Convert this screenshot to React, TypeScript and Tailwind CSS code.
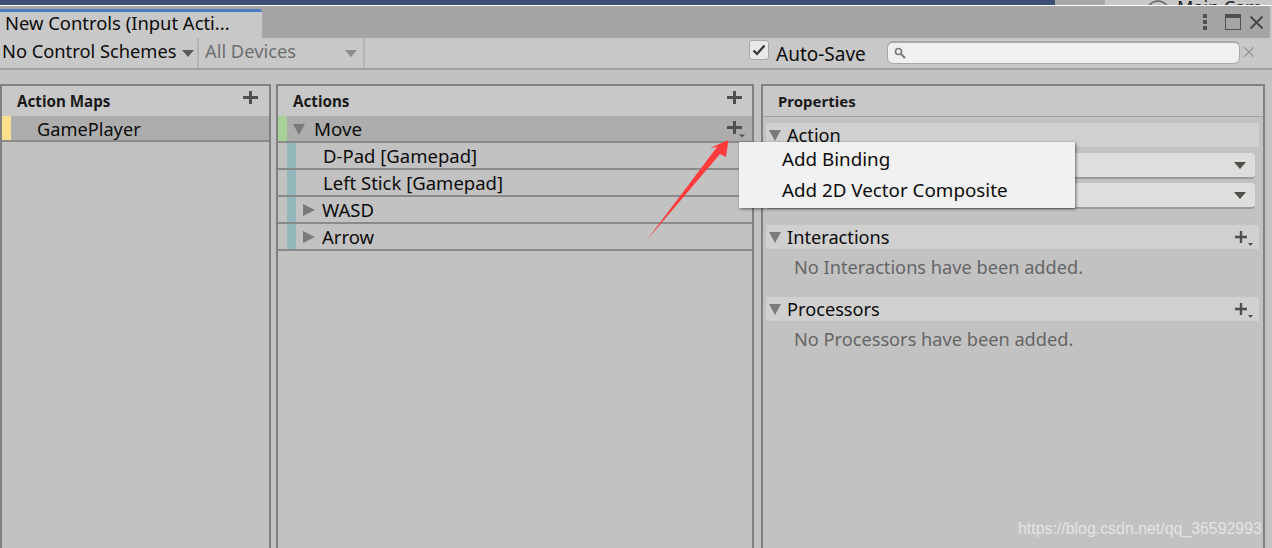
const FONT = "font-['Noto_Sans','Open_Sans',sans-serif]";

function Caret({ open, className = "" }: { open?: boolean; className?: string }) {
  return (
    <svg width="12" height="12" viewBox="0 0 12 12" className={`shrink-0 ${className}`}>
      {open ? <path d="M0 1h12L6 12z" fill="#7a7a7a" /> : <path d="M0 0l12 6L0 12z" fill="#7a7a7a" />}
    </svg>
  );
}

function Plus({ more }: { more?: boolean }) {
  return (
    <svg width="20" height="18" viewBox="0 0 20 18" className="shrink-0">
      <path d="M8.5 1v13M1 7.5h15" stroke="#505050" strokeWidth="3" fill="none" />
      {more && <path d="M13 14.5h6l-3 3z" fill="#505050" />}
    </svg>
  );
}

function SectionPlus() {
  return (
    <svg width="18" height="16" viewBox="0 0 18 16" className="mt-[4px] shrink-0">
      <path d="M6 0v12M0 6h12" stroke="#505050" strokeWidth="2.4" fill="none" />
      <path d="M13 12h5l-2.5 3z" fill="#505050" />
    </svg>
  );
}

function SmallDown({ color = "#5a5a5a" }: { color?: string }) {
  return (
    <svg width="12" height="7" viewBox="0 0 12 7" className="shrink-0">
      <path d="M0 0h12L6 7z" fill={color} />
    </svg>
  );
}

function Cross({ size, stroke, color }: { size: number; stroke: number; color: string }) {
  return (
    <svg width={size} height={size} viewBox="0 0 12 12" className="shrink-0">
      <path d="M0.5 0.5l11 11M11.5 0.5l-11 11" stroke={color} strokeWidth={stroke} fill="none" />
    </svg>
  );
}

function Row({ label, caret, indent }: { label: string; caret?: boolean; indent: string }) {
  return (
    <div className="flex h-[27px] items-center border-b-2 border-[#8a8a8a] bg-[#c2c2c2]">
      <div className="ml-[9px] h-full w-[9px] bg-[#93b9bd]" />
      <div className={`flex items-center ${indent}`}>
        {caret && <Caret className="mr-[7px]" />}
        <span className="mt-[2px] text-[18.5px] leading-none text-[#0c0c0c]">{label}</span>
      </div>
    </div>
  );
}

function PropSection({ title, empty }: { title: string; empty: string }) {
  return (
    <div className="mb-[16px]">
      <div className="ml-[3px] mr-[4px] flex h-[24px] items-center bg-[#d0d0d0] pl-[3px] pr-[6px]">
        <Caret open />
        <span className="ml-[6px] text-[18.2px] leading-none text-[#0c0c0c]">{title}</span>
        <span className="ml-auto">
          <SectionPlus />
        </span>
      </div>
      <div className="ml-[31px] mt-[5px] h-[27px] text-[18.2px] leading-[27px] text-[#666666]">{empty}</div>
    </div>
  );
}

export default function App() {
  return (
    <div className={`relative h-[548px] w-[1272px] overflow-hidden bg-[#c2c2c2] ${FONT}`}>
      {/* Strip of the editor behind the window */}
      <div className="flex h-[5px] overflow-hidden bg-[#c8c8c8]">
        <div className="w-[1055px] shrink-0 bg-[#3d4f73]" />
        <div className="w-[50px] shrink-0 bg-[#a8a8a8]" />
        <svg width="20" height="5" viewBox="0 0 20 5" className="ml-[43px] shrink-0">
          <path d="M1 5Q10 -3 19 5" stroke="#666666" strokeWidth="1.5" fill="none" />
        </svg>
        <span className="-mt-[5px] ml-[9px] text-[18px] leading-6 whitespace-nowrap text-[#222222]">Main Cam</span>
      </div>
      <div className="h-px bg-white" />

      {/* Tab bar */}
      <div className="bg-[#c8c8c8]">
        <div className="mr-[2px] flex h-[32px] items-end justify-between bg-[#a5a5a5]">
          <div className="flex h-[29px] w-[262px] items-center rounded-tr-[3px] border-t-[3px] border-[#4a7cc4] bg-[#c8c8c8] pb-[4px] pl-[5px] text-[18.4px] text-[#0c0c0c]">
            New Controls (Input Acti...
          </div>
          <div className="mb-[8px] mr-[7px] flex items-center">
            <svg width="4" height="16" viewBox="0 0 4 16">
              <rect x="0" y="0" width="4" height="4" fill="#505050" />
              <rect x="0" y="6" width="4" height="4" fill="#505050" />
              <rect x="0" y="12" width="4" height="4" fill="#505050" />
            </svg>
            <svg width="16" height="16" viewBox="0 0 16 16" className="ml-[18px]">
              <rect x="0.5" y="0.5" width="15" height="15" fill="none" stroke="#505050" />
              <rect x="0" y="0" width="16" height="4" fill="#505050" />
            </svg>
            <span className="ml-[9px]">
              <Cross size={13} stroke={1.8} color="#484848" />
            </span>
          </div>
        </div>
      </div>

      {/* Toolbar */}
      <div className="flex h-[32px] items-center border-b-2 border-[#a0a0a0] bg-[#c8c8c8]">
        <div className="flex h-[30px] w-[199px] items-center border-r-2 border-[#b4b4b4] pb-[4px] pl-[2px]">
          <span className="text-[18.3px] leading-none text-[#0c0c0c]">No Control Schemes</span>
          <span className="ml-[5px] mt-[4px]">
            <SmallDown />
          </span>
        </div>
        <div className="ml-[6px] flex h-[30px] w-[160px] items-center border-r-2 border-[#b4b4b4] pb-[4px]">
          <span className="text-[18.3px] leading-none text-[#6f6f6f]">All Devices</span>
          <span className="ml-auto mr-[6px] mt-[4px]">
            <SmallDown color="#8a8a8a" />
          </span>
        </div>
        <div className="mb-[6px] ml-[384px] flex h-[20px] w-[20px] items-center justify-center rounded-[3px] border border-[#a8a8a8] bg-[#e8e8e8]">
          <svg width="14" height="12" viewBox="0 0 14 12">
            <path d="M1.5 6.5l3.5 3.5 7.5-8.5" stroke="#333333" strokeWidth="2.2" fill="none" />
          </svg>
        </div>
        <span className="ml-[7px] mt-[2px] text-[19px] leading-none text-[#0c0c0c]">Auto-Save</span>
        <div className="mb-[2px] ml-[21px] flex h-[23px] w-[353px] items-center rounded-[6px] border border-t-2 border-[#a8a8a8] bg-[#f0f0f0] pl-[6px]">
          <svg width="12" height="12" viewBox="0 0 12 12">
            <circle cx="4.5" cy="4.5" r="3" stroke="#777777" strokeWidth="1.6" fill="none" />
            <path d="M7 7l4 4" stroke="#777777" strokeWidth="2" />
          </svg>
        </div>
        <span className="ml-[4px] mb-[2px]">
          <Cross size={10} stroke={1.4} color="#8c8c8c" />
        </span>
      </div>

      {/* Panels */}
      <div className="mt-[14px] flex h-[464px] items-stretch">
        <div className="w-[271px] border-2 border-b-0 border-[#808080] bg-[#c2c2c2]">
          <div className="flex h-[30px] items-center justify-between bg-[#c8c8c8] pl-[15px] pr-[7px]">
            <span className="text-[15.2px] font-bold text-[#1a1a1a]">Action Maps</span>
            <span className="-mt-[5px]">
              <Plus />
            </span>
          </div>
          <div className="flex h-[26px] items-center border-b-2 border-[#8a8a8a] bg-[#adadad]">
            <div className="h-full w-[9px] bg-[#fde08c]" />
            <span className="ml-[26px] mt-[2px] text-[18.2px] leading-none text-[#0c0c0c]">GamePlayer</span>
          </div>
        </div>

        <div className="ml-[5px] w-[478px] border-2 border-b-0 border-[#808080] bg-[#c2c2c2]">
          <div className="flex h-[30px] items-center justify-between bg-[#c8c8c8] pl-[15px] pr-[6px]">
            <span className="text-[15.2px] font-bold text-[#1a1a1a]">Actions</span>
            <span className="-mt-[5px]">
              <Plus />
            </span>
          </div>
          <div className="flex h-[27px] items-center justify-between border-b-2 border-[#8a8a8a] bg-[#adadad] pr-[6px]">
            <div className="flex h-full items-center">
              <div className="h-full w-[9px] bg-[#a8d098]" />
              <Caret open className="ml-[6px]" />
              <span className="ml-[9px] mt-[2px] text-[18.8px] leading-none text-[#0c0c0c]">Move</span>
            </div>
            <Plus more />
          </div>
          <Row label="D-Pad [Gamepad]" indent="ml-[27px]" />
          <Row label="Left Stick [Gamepad]" indent="ml-[27px]" />
          <Row label="WASD" caret indent="ml-[7px]" />
          <Row label="Arrow" caret indent="ml-[7px]" />
        </div>

        <div className="ml-[7px] w-[504px] border-2 border-b-0 border-[#808080] bg-[#c2c2c2]">
          <div className="flex h-[31px] items-center border-b border-[#a0a0a0] bg-[#c8c8c8] pl-[15px]">
            <span className="text-[15px] font-bold text-[#1a1a1a]">Properties</span>
          </div>
          <div className="ml-[3px] mr-[4px] mt-[6px] flex h-[24px] items-center bg-[#d0d0d0] pl-[3px]">
            <Caret open />
            <span className="ml-[6px] text-[18.2px] leading-none text-[#0c0c0c]">Action</span>
          </div>
          <div className="ml-[3px] mr-[8px] mt-[6px] flex h-[26px] items-center justify-end rounded-[4px] border-b-2 border-[#9c9c9c] bg-[#dedede] pr-[9px]">
            <SmallDown color="#505048" />
          </div>
          <div className="mb-[16px] ml-[3px] mr-[8px] mt-[4px] flex h-[26px] items-center justify-end rounded-[4px] border-b-2 border-[#9c9c9c] bg-[#dedede] pr-[9px]">
            <SmallDown color="#505048" />
          </div>
          <PropSection title="Interactions" empty="No Interactions have been added." />
          <PropSection title="Processors" empty="No Processors have been added." />
        </div>
      </div>

      {/* Dropdown menu */}
      <div className="absolute left-[739px] top-[142px] h-[66px] w-[336px] bg-[#f1f1f1] pl-[43px] pt-[2px] text-[18.8px] leading-[31px] text-[#0c0c0c] shadow-[1px_1px_3px_rgba(0,0,0,0.55)]">
        <div>Add Binding</div>
        <div>Add 2D Vector Composite</div>
      </div>

      {/* Red annotation arrow */}
      <svg width="100" height="120" viewBox="0 0 100 120" className="absolute left-[640px] top-[130px]">
        <path d="M6.5 110.5L77 17L70 18L88.5 10L86 27L80 24Z" fill="#ff3b3b" />
      </svg>

      {/* Watermark */}
      <span className="absolute left-[1018px] top-[519px] font-['Liberation_Sans',sans-serif] text-[15.9px] leading-5 text-[#e4e4e4]">
        https://blog.csdn.net/qq_36592993
      </span>
    </div>
  );
}
